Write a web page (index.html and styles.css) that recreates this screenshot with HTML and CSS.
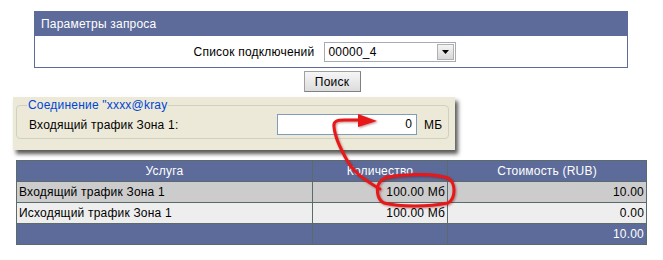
FILE: index.html
```html
<!DOCTYPE html>
<html lang="ru">
<head>
    <meta charset="UTF-8">
    <title>Параметры запроса</title>
    <link rel="stylesheet" href="styles.css">
</head>
<body>
    <div class="page">
        <div class="params">
            <div class="params-head">Параметры запроса</div>
            <div class="params-body">
                <span>Список подключений</span>
                <div class="select">
                    <span class="select-value">00000_4</span>
                    <span class="select-btn"><svg width="7" height="4" viewBox="0 0 7 4"><path d="M0 0h7L3.5 4z" fill="#000"/></svg></span>
                </div>
            </div>
        </div>

        <div class="search-row">
            <button class="search-btn">Поиск</button>
        </div>

        <div class="conn-panel">
            <fieldset class="conn">
                <legend>Соединение "xxxx@kray</legend>
                <div class="conn-row">
                    <span class="conn-label">Входящий трафик Зона 1:</span>
                    <span class="conn-input">0</span>
                    <span class="conn-unit">МБ</span>
                </div>
            </fieldset>
        </div>

        <table class="report">
            <thead>
                <tr>
                    <th class="col-service">Услуга</th>
                    <th class="col-qty">Количество</th>
                    <th>Стоимость (RUB)</th>
                </tr>
            </thead>
            <tbody>
                <tr class="odd">
                    <td>Входящий трафик Зона 1</td>
                    <td class="num">100.00 Мб</td>
                    <td class="num">10.00</td>
                </tr>
                <tr class="even">
                    <td>Исходящий трафик Зона 1</td>
                    <td class="num">100.00 Мб</td>
                    <td class="num">0.00</td>
                </tr>
            </tbody>
            <tfoot>
                <tr>
                    <td></td>
                    <td></td>
                    <td class="num">10.00</td>
                </tr>
            </tfoot>
        </table>

        <!-- red annotation drawn over the page -->
        <svg class="note" width="663" height="260" viewBox="0 0 663 260">
            <path d="M380 189 C368 182 355 174 348 162 C341 150 335 138 334 127 C333 121 337 120 345 120 L362 120" fill="none" stroke="#e81818" stroke-width="3" stroke-linecap="round"/>
            <path d="M358 114 L377 121 L358 127 Z" fill="#e81818"/>
            <path d="M386 177 C408 173 436 174 448 178 C456 183 456 198 448 203 C428 207 400 207 384 203 C376 199 376 186 380 182 C382 179 386 177 390 177" fill="none" stroke="#e81818" stroke-width="3" stroke-linecap="round"/>
        </svg>
    </div>
</body>
</html>
```

FILE: styles.css
```css
body {
    margin: 0;
    background: #fff;
    font-family: "Liberation Sans", Arial, sans-serif;
    font-size: 12px;
    letter-spacing: 0.2px;
    color: #000;
}
.page {
    position: relative;
    width: 663px;
    height: 260px;
    padding-top: 11px;
    box-sizing: border-box;
}
.params {
    margin-left: 34px;
    width: 592px;
    border: 1px solid #5d6b9a;
}
.params-head {
    background: #5d6b9a;
    color: #fff;
    height: 24px;
    line-height: 25px;
    padding-left: 6px;
}
.params-body {
    display: flex;
    align-items: center;
    justify-content: center;
    gap: 10px;
    height: 31px;
    padding-right: 12px;
}
.select {
    display: flex;
    align-items: center;
    width: 130px;
    height: 18px;
    border: 1px solid #a5acb2;
    background: #fff;
}
.select-value {
    flex: 1;
    padding-left: 3px;
}
.select-btn {
    display: flex;
    align-items: center;
    justify-content: center;
    width: 15px;
    height: 14px;
    margin-right: 1px;
    border: 1px solid #b0b0b0;
    background: linear-gradient(#f4f4f4, #d8d8d8);
}
.search-row {
    width: 596px;
    margin-left: 34px;
    display: flex;
    justify-content: center;
    padding-top: 3px;
}
.search-btn {
    width: 57px;
    height: 21px;
    padding: 0;
    font-family: inherit;
    font-size: 12px;
    letter-spacing: 0.2px;
    background: linear-gradient(#f6f6f6, #dcdcdc);
    border: 1px solid #a0a0a0;
    border-right-color: #808080;
    border-bottom-color: #808080;
}
.conn-panel {
    margin-top: 5px;
    margin-left: 13px;
    width: 442px;
    height: 53px;
    box-sizing: border-box;
    padding: 1px 6px 0 3px;
    background: #ece9d8;
    box-shadow: 3px 4px 4px rgba(0, 0, 0, 0.65);
}
.conn {
    margin: 0;
    padding: 2px 0 0 12px;
    height: 41px;
    box-sizing: border-box;
    border: 1px solid #d0d0bf;
    border-radius: 4px;
}
.conn legend {
    color: #0046d5;
    padding: 0 1px;
    margin-left: -2px;
}
.conn-row {
    display: flex;
    align-items: center;
}
.conn-label {
    width: 248px;
}
.conn-input {
    width: 134px;
    height: 19px;
    line-height: 19px;
    border: 1px solid #7f9db9;
    background: #fff;
    text-align: right;
    padding-right: 4px;
}
.conn-unit {
    margin-left: 7px;
}
.report {
    margin-top: 10px;
    margin-left: 16px;
    width: 631px;
    border-collapse: collapse;
    table-layout: fixed;
    font-size: 12px;
}
.report th,
.report td {
    border: 1px solid #5b6b6b;
    height: 20px;
    padding: 0 2px;
}
.report th {
    background: #5d6b9a;
    color: #fff;
    font-weight: normal;
    text-align: center;
}
.col-service {
    width: 291px;
}
.col-qty {
    width: 130px;
}
.report .odd td {
    background: #cccccc;
}
.report .even td {
    background: #eeeeee;
}
.report tfoot td {
    background: #5d6b9a;
    color: #fff;
}
.report .num {
    text-align: right;
}
.note {
    position: absolute;
    left: 0;
    top: 0;
    pointer-events: none;
    filter: drop-shadow(1px 1px 1px rgba(120, 0, 0, 0.45));
}
```
